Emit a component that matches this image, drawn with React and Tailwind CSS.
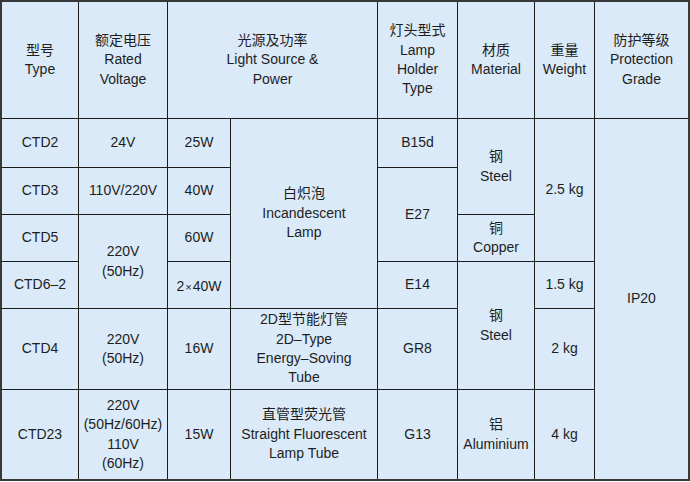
const Cell = ({ className = "", children }) => (
  <div
    className={`bg-[#daeaf8] flex flex-col items-center justify-center text-center ${className}`}
  >
    {children}
  </div>
);

const App = () => {
  return (
    <div className="w-[690px] h-[482px] bg-white">
      <div
        className="grid grid-cols-[76px_88px_62px_146px_79px_76px_59px_93px] grid-rows-[116px_48px_46px_46px_46px_80px_89px] gap-px bg-[#1c1c1c] border-2 border-[#383838] w-[690px] text-[14px] leading-[19.4px] text-[#1e1e1e]"
        style={{ fontFamily: '"Liberation Sans", "Noto Sans CJK SC", sans-serif' }}
      >
        {/* header */}
        <Cell>
          <span>型号</span>
          <span>Type</span>
        </Cell>
        <Cell>
          <span>额定电压</span>
          <span>Rated</span>
          <span>Voltage</span>
        </Cell>
        <Cell className="col-span-2">
          <span>光源及功率</span>
          <span>Light Source &amp;</span>
          <span>Power</span>
        </Cell>
        <Cell>
          <span>灯头型式</span>
          <span>Lamp</span>
          <span>Holder</span>
          <span>Type</span>
        </Cell>
        <Cell>
          <span>材质</span>
          <span>Material</span>
        </Cell>
        <Cell>
          <span>重量</span>
          <span>Weight</span>
        </Cell>
        <Cell>
          <span>防护等级</span>
          <span>Protection</span>
          <span>Grade</span>
        </Cell>

        {/* CTD2 */}
        <Cell className="col-start-1 row-start-2">CTD2</Cell>
        <Cell className="col-start-2 row-start-2">24V</Cell>
        <Cell className="col-start-3 row-start-2">25W</Cell>
        <Cell className="col-start-4 row-start-2 row-span-4">
          <span>白炽泡</span>
          <span>Incandescent</span>
          <span>Lamp</span>
        </Cell>
        <Cell className="col-start-5 row-start-2">B15d</Cell>
        <Cell className="col-start-6 row-start-2 row-span-2">
          <span>钢</span>
          <span>Steel</span>
        </Cell>
        <Cell className="col-start-7 row-start-2 row-span-3">2.5 kg</Cell>
        <Cell className="col-start-8 row-start-2 row-span-6">IP20</Cell>

        {/* CTD3 */}
        <Cell className="col-start-1 row-start-3">CTD3</Cell>
        <Cell className="col-start-2 row-start-3">110V/220V</Cell>
        <Cell className="col-start-3 row-start-3">40W</Cell>
        <Cell className="col-start-5 row-start-3 row-span-2">E27</Cell>

        {/* CTD5 */}
        <Cell className="col-start-1 row-start-4">CTD5</Cell>
        <Cell className="col-start-2 row-start-4 row-span-2">
          <span>220V</span>
          <span>(50Hz)</span>
        </Cell>
        <Cell className="col-start-3 row-start-4">60W</Cell>
        <Cell className="col-start-6 row-start-4">
          <span>铜</span>
          <span>Copper</span>
        </Cell>

        {/* CTD6-2 */}
        <Cell className="col-start-1 row-start-5">CTD6–2</Cell>
        <Cell className="col-start-3 row-start-5 pt-1">
          <span>
            2<span className="text-[11px] px-px">×</span>40W
          </span>
        </Cell>
        <Cell className="col-start-5 row-start-5">E14</Cell>
        <Cell className="col-start-6 row-start-5 row-span-2">
          <span>钢</span>
          <span>Steel</span>
        </Cell>
        <Cell className="col-start-7 row-start-5">1.5 kg</Cell>

        {/* CTD4 */}
        <Cell className="col-start-1 row-start-6">CTD4</Cell>
        <Cell className="col-start-2 row-start-6">
          <span>220V</span>
          <span>(50Hz)</span>
        </Cell>
        <Cell className="col-start-3 row-start-6">16W</Cell>
        <Cell className="col-start-4 row-start-6">
          <span>2D型节能灯管</span>
          <span>2D–Type</span>
          <span>Energy–Soving</span>
          <span>Tube</span>
        </Cell>
        <Cell className="col-start-5 row-start-6">GR8</Cell>
        <Cell className="col-start-7 row-start-6">2 kg</Cell>

        {/* CTD23 */}
        <Cell className="col-start-1 row-start-7">CTD23</Cell>
        <Cell className="col-start-2 row-start-7">
          <span>220V</span>
          <span>(50Hz/60Hz)</span>
          <span>110V</span>
          <span>(60Hz)</span>
        </Cell>
        <Cell className="col-start-3 row-start-7">15W</Cell>
        <Cell className="col-start-4 row-start-7">
          <span>直管型荧光管</span>
          <span>Straight Fluorescent</span>
          <span>Lamp Tube</span>
        </Cell>
        <Cell className="col-start-5 row-start-7">G13</Cell>
        <Cell className="col-start-6 row-start-7">
          <span>铝</span>
          <span>Aluminium</span>
        </Cell>
        <Cell className="col-start-7 row-start-7">4 kg</Cell>
      </div>
    </div>
  );
};

export default App;
